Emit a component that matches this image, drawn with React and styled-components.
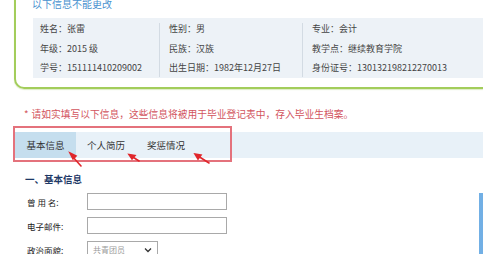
import React from "react";
import styled, { createGlobalStyle } from "styled-components";

const Global = createGlobalStyle`
  html, body { margin: 0; padding: 0; background: #fff; }
  body { font-family: "Noto Sans CJK SC", "Liberation Sans", sans-serif; overflow: hidden; }
`;

const Page = styled.div`
  width: 483px;
  height: 254px;
  overflow: hidden;
  position: relative;
`;

const TopBox = styled.div`
  margin: -12px 0 0 14px;
  border: 2px solid #a3cd5b;
  border-right: none;
  border-bottom-left-radius: 10px;
  padding: 7px 0 9px 0;
  box-shadow: 0 1px 1px rgba(160, 200, 90, 0.35);
`;

const Title = styled.div`
  font-size: 10px;
  line-height: 14px;
  color: #4a92cf;
  padding-left: 16px;
`;

const InfoPanel = styled.div`
  margin: 7px 0 0 17px;
  height: 60px;
  box-sizing: border-box;
  padding: 1px 0;
  background: #edf2f7;
  display: grid;
  grid-template-columns: 126px 143px 1fr;
`;

const Column = styled.div`
  position: relative;
  padding-left: ${(p) => (p.$first ? 7 : 10)}px;
  &::before {
    content: "";
    display: ${(p) => (p.$first ? "none" : "block")};
    position: absolute;
    left: 0;
    top: 4px;
    bottom: 1px;
    width: 1px;
    background: #d3dbe3;
  }
`;

const InfoRow = styled.div`
  height: 19.5px;
  line-height: 19.5px;
  font-size: 9px;
  color: #444;
  white-space: nowrap;
`;

const Notice = styled.div`
  margin: 18px 0 0 24px;
  font-size: 9.75px;
  line-height: 14px;
  color: #d2545e;
  white-space: nowrap;
`;

const Star = styled.span`
  margin-right: 3px;
`;

const TabSection = styled.div`
  position: relative;
  margin: 11px 0 0 14px;
`;

const TabBar = styled.div`
  height: 26px;
  background: #e8f1f8;
  display: flex;
  padding-left: 1px;
`;

const Tab = styled.div`
  width: ${(p) => (p.$active ? 61 : 60)}px;
  height: 26px;
  line-height: 26px;
  text-align: center;
  font-size: 9.5px;
  color: #333;
  background: ${(p) => (p.$active ? "#c5deee" : "transparent")};
`;

const Annotation = styled.svg`
  position: absolute;
  left: -14px;
  top: -6px;
  pointer-events: none;
`;

const SectionTitle = styled.div`
  margin: 14px 0 0 25px;
  font-size: 9.5px;
  line-height: 14px;
  font-weight: bold;
  color: #1d3866;
`;

const FormArea = styled.div`
  display: flex;
  padding-top: 7px;
`;

const Form = styled.div`
  display: flex;
  flex-direction: column;
  gap: 7px;
  padding-left: 27px;
`;

const FormRow = styled.div`
  display: flex;
  align-items: center;
  height: 17px;
`;

const Label = styled.div`
  width: 60px;
  font-size: 8.5px;
  color: #222;
  white-space: pre;
`;

const Input = styled.div`
  width: 140px;
  height: 17px;
  box-sizing: border-box;
  border: 1px solid #a9a9a9;
  background: #fff;
`;

const Select = styled.div`
  width: 71px;
  height: 17px;
  box-sizing: border-box;
  border: 1px solid #a9a9a9;
  display: flex;
  align-items: center;
  justify-content: space-between;
  padding: 0 5px 0 5px;
  font-size: 8px;
  color: #9a9a9a;
`;

const Photo = styled.div`
  margin-left: auto;
  width: 4px;
  height: 70px;
  background-color: #3f8fd6;
  background-image: radial-gradient(circle, #8fc2ee 0.6px, transparent 0.9px);
  background-size: 2px 2px;
`;

const info = [
  ["姓名：张雷", "年级：2015 级", "学号：151111410209002"],
  ["性别：男", "民族：汉族", "出生日期：1982年12月27日"],
  ["专业：会计", "教学点：继续教育学院", "身份证号：130132198212270013"],
];

export default function App() {
  return (
    <Page>
      <Global />
      <TopBox>
        <Title>以下信息不能更改</Title>
        <InfoPanel>
          {info.map((col, i) => (
            <Column key={i} $first={i === 0}>
              {col.map((t) => (
                <InfoRow key={t}>{t}</InfoRow>
              ))}
            </Column>
          ))}
        </InfoPanel>
      </TopBox>
      <Notice>
        <Star>*</Star>请如实填写以下信息，这些信息将被用于毕业登记表中，存入毕业生档案。
      </Notice>
      <TabSection>
        <TabBar>
          <Tab $active>基本信息</Tab>
          <Tab>个人简历</Tab>
          <Tab>奖惩情况</Tab>
        </TabBar>
        <Annotation width="240" height="46" viewBox="0 126 240 46">
          <rect x="14" y="127" width="217" height="34" fill="none" stroke="#e4727c" strokeWidth="2" />
          <g stroke="#e0262b" strokeWidth="1.6" fill="#e0262b" strokeLinecap="round">
            <line x1="81" y1="166" x2="72" y2="156" />
            <polygon points="70,153 76,156 73,159" />
            <line x1="139" y1="161" x2="132" y2="156.5" />
            <polygon points="129,154.5 135,155.5 132,159" />
            <line x1="209" y1="163" x2="198" y2="156" />
            <polygon points="195,154 201,155 198,159" />
          </g>
        </Annotation>
      </TabSection>
      <SectionTitle>一、基本信息</SectionTitle>
      <FormArea>
        <Form>
          <FormRow>
            <Label>{"曾 用 名:"}</Label>
            <Input />
          </FormRow>
          <FormRow>
            <Label>电子邮件:</Label>
            <Input />
          </FormRow>
          <FormRow>
            <Label>政治面貌:</Label>
            <Select>
              <span>共青团员</span>
              <svg width="8" height="6" viewBox="0 0 8 6">
                <path d="M1 1.5 L4 4.5 L7 1.5" fill="none" stroke="#333" strokeWidth="1.3" />
              </svg>
            </Select>
          </FormRow>
        </Form>
        <Photo />
      </FormArea>
    </Page>
  );
}
